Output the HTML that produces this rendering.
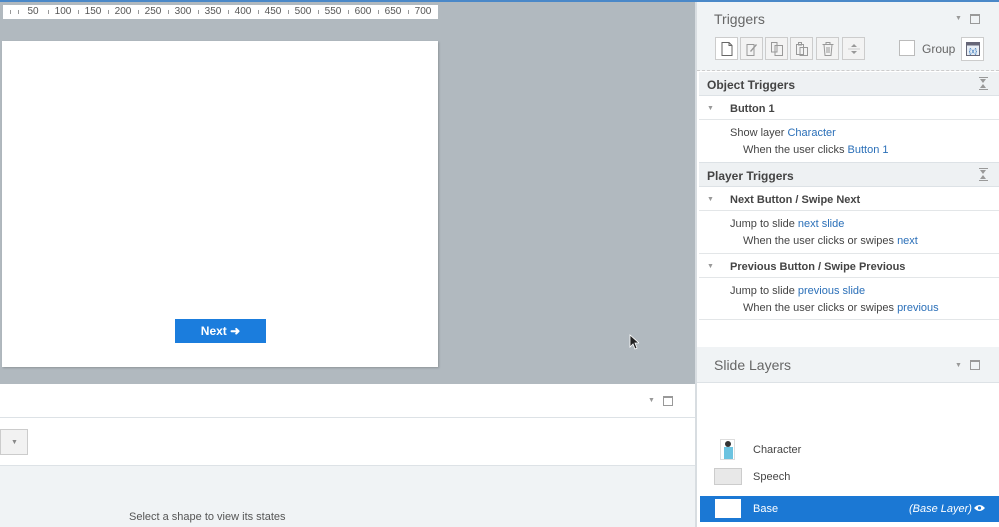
<!DOCTYPE html>
<html><head><style>
*{margin:0;padding:0;box-sizing:border-box}
body{width:999px;height:527px;overflow:hidden;position:relative;font-family:"Liberation Sans",sans-serif;background:#fff;color:#444}
.a{position:absolute}
.t{font-size:11px;white-space:nowrap}
.blue{color:#2a6fb8}
.ib{position:absolute;width:23px;height:23px;border:1px solid #ccc;background:#f3f3f3;top:37px}
.ib svg{position:absolute;left:5px;top:4px}
.r{position:absolute;top:0;font-size:10px;color:#555;transform:translateX(-50%);line-height:14px}
.tk{position:absolute;top:5px;width:1px;height:4px;background:#999}
.mn{position:absolute;width:10px;height:10px;border:1px solid #999;border-top-width:2px}
</style></head><body>
<div class="a" style="left:0;top:0;width:697px;height:384px;background:#b1b9bf"></div>
<div class="a" style="left:0;top:0;width:999px;height:2px;background:#4a88c8"></div>
<div class="a" style="left:3px;top:5px;width:435px;height:14px;background:#fff">
<div class="tk" style="left:7px"></div><div class="tk" style="left:15px"></div>
<span class="r" style="left:30px">50</span><div class="tk" style="left:45px"></div>
<span class="r" style="left:60px">100</span><div class="tk" style="left:75px"></div>
<span class="r" style="left:90px">150</span><div class="tk" style="left:105px"></div>
<span class="r" style="left:120px">200</span><div class="tk" style="left:135px"></div>
<span class="r" style="left:150px">250</span><div class="tk" style="left:165px"></div>
<span class="r" style="left:180px">300</span><div class="tk" style="left:195px"></div>
<span class="r" style="left:210px">350</span><div class="tk" style="left:225px"></div>
<span class="r" style="left:240px">400</span><div class="tk" style="left:255px"></div>
<span class="r" style="left:270px">450</span><div class="tk" style="left:285px"></div>
<span class="r" style="left:300px">500</span><div class="tk" style="left:315px"></div>
<span class="r" style="left:330px">550</span><div class="tk" style="left:345px"></div>
<span class="r" style="left:360px">600</span><div class="tk" style="left:375px"></div>
<span class="r" style="left:390px">650</span><div class="tk" style="left:405px"></div>
<span class="r" style="left:420px">700</span>
</div>
<div class="a" style="left:2px;top:41px;width:436px;height:326px;background:#fff;box-shadow:1px 1px 2px rgba(0,0,0,.2)"></div>
<div class="a" style="left:175px;top:319px;width:91px;height:24px;background:#1b7ddd;color:#fff;font-weight:bold;font-size:12px;text-align:center;line-height:24px">Next ➜</div>
<svg class="a" style="left:629px;top:334px" width="10" height="16" viewBox="0 0 10 16"><path d="M1 1 L1 13 L4 10 L6 15 L8 14 L6 9 L10 9 Z" fill="#222" stroke="#fff" stroke-width=".8"/></svg>
<div class="a" style="left:0;top:384px;width:697px;height:34px;background:#fff;border-bottom:1px solid #dde2e6"></div>
<div class="a" style="left:648px;top:397px;font-size:7px;color:#999">▼</div>
<div class="mn" style="left:663px;top:396px"></div>
<div class="a" style="left:0;top:429px;width:28px;height:26px;background:#f2f2f2;border:1px solid #ccc;font-size:7px;color:#888;padding:9px 0 0 10px">▼</div>
<div class="a" style="left:0;top:465px;width:697px;height:62px;background:#f0f3f5;border-top:1px solid #dde2e6"></div>
<div class="a t" style="left:129px;top:511px;font-size:11px;color:#555">Select a shape to view its states</div>

<div class="a" style="left:695px;top:2px;width:304px;height:525px;background:#fff;border-left:2px solid #d8dde1"></div>
<div class="a" style="left:697px;top:2px;width:302px;height:69px;background:#f0f3f5;border-bottom:1px dashed #ccc"></div>
<div class="a" style="left:714px;top:11px;font-size:14px;color:#666">Triggers</div>
<div class="a" style="left:955px;top:15px;font-size:7px;color:#999">▼</div>
<div class="mn" style="left:970px;top:14px"></div>
<div class="ib" style="left:715px;background:#fff"><svg width="12" height="14" viewBox="0 0 12 14"><path d="M1 .5H8L11 3.5V13.5H1Z M8 .5V3.5H11" fill="none" stroke="#666"/></svg></div>
<div class="ib" style="left:740px"><svg width="12" height="14" viewBox="0 0 12 14"><path d="M1 2.5H8V13.5H1Z" fill="none" stroke="#999"/><path d="M4 9L10 2L11 3L5 10Z" fill="#999"/></svg></div>
<div class="ib" style="left:765px"><svg width="12" height="14" viewBox="0 0 12 14"><path d="M.5 .5H6V10H.5Z M4 3.5H11.5V13.5H4Z" fill="#f3f3f3" stroke="#999"/></svg></div>
<div class="ib" style="left:790px"><svg width="12" height="14" viewBox="0 0 12 14"><path d="M.5 2.5H7.5V12.5H.5Z M4 5.5H11.5V13.5H4Z M2.5 .5H5.5V3H2.5Z" fill="#f3f3f3" stroke="#999"/></svg></div>
<div class="ib" style="left:816px"><svg width="12" height="14" viewBox="0 0 12 14"><path d="M.5 2.5H11.5 M4 2.5V.5H8V2.5 M2 2.5L3 13.5H9L10 2.5 M5 5V11 M7 5V11" fill="none" stroke="#999"/></svg></div>
<div class="ib" style="left:842px"><svg width="12" height="14" viewBox="0 0 12 14"><path d="M3 5L6 2L9 5Z M3 9L6 12L9 9Z" fill="#999"/><path d="M-3 7H15" stroke="#ccc"/></svg></div>
<div class="a" style="left:899px;top:40px;width:16px;height:16px;border:1px solid #bbb;background:#fff"></div>
<div class="a" style="left:922px;top:42px;font-size:12px;color:#666">Group</div>
<div class="a" style="left:961px;top:37px;width:23px;height:24px;border:1px solid #ccc;background:#fff"><svg style="position:absolute;left:4px;top:4px" width="14" height="14" viewBox="0 0 14 14"><rect x=".5" y=".5" width="13" height="13" fill="#e8eef5" stroke="#667"/><rect x=".5" y=".5" width="13" height="3" fill="#667"/><text x="7" y="11.5" font-size="7" text-anchor="middle" fill="#2a6fb8" font-family="Liberation Sans">{x}</text></svg></div>
<div class="a" style="left:699px;top:72px;width:300px;height:24px;background:#eef1f3;border-bottom:1px solid #dde2e6;font-size:12px;font-weight:bold;color:#444;padding:6px 8px">Object Triggers</div>
<div class="a" style="left:979px;top:77px;width:9px;height:13px;border-top:1px solid #999;border-bottom:1px solid #999"><div style="position:absolute;left:1px;top:1px;border:3.5px solid transparent;border-top:4px solid #999"></div><div style="position:absolute;left:1px;top:3px;border:3.5px solid transparent;border-bottom:4px solid #999"></div></div>
<div class="a t" style="left:707px;top:105px;font-size:7px;color:#999">▼</div>
<div class="a t" style="left:730px;top:103px;font-weight:bold">Button 1</div>
<div class="a" style="left:699px;top:119px;width:300px;border-top:1px solid #e3e6e8"></div>
<div class="a t" style="left:730px;top:127px">Show layer <span class="blue">Character</span></div>
<div class="a t" style="left:743px;top:144px">When the user clicks <span class="blue">Button 1</span></div>
<div class="a" style="left:699px;top:162px;width:300px;height:25px;background:#eef1f3;border-top:1px solid #dde2e6;border-bottom:1px solid #dde2e6;font-size:12px;font-weight:bold;color:#444;padding:6px 8px">Player Triggers</div>
<div class="a" style="left:979px;top:168px;width:9px;height:13px;border-top:1px solid #999;border-bottom:1px solid #999"><div style="position:absolute;left:1px;top:1px;border:3.5px solid transparent;border-top:4px solid #999"></div><div style="position:absolute;left:1px;top:3px;border:3.5px solid transparent;border-bottom:4px solid #999"></div></div>
<div class="a t" style="left:707px;top:196px;font-size:7px;color:#999">▼</div>
<div class="a t" style="left:730px;top:194px;font-weight:bold">Next Button / Swipe Next</div>
<div class="a" style="left:699px;top:210px;width:300px;border-top:1px solid #e3e6e8"></div>
<div class="a t" style="left:730px;top:218px">Jump to slide <span class="blue">next slide</span></div>
<div class="a t" style="left:743px;top:235px">When the user clicks or swipes <span class="blue">next</span></div>
<div class="a" style="left:699px;top:253px;width:300px;border-top:1px solid #e3e6e8"></div>
<div class="a t" style="left:707px;top:263px;font-size:7px;color:#999">▼</div>
<div class="a t" style="left:730px;top:261px;font-weight:bold">Previous Button / Swipe Previous</div>
<div class="a" style="left:699px;top:277px;width:300px;border-top:1px solid #e3e6e8"></div>
<div class="a t" style="left:730px;top:285px">Jump to slide <span class="blue">previous slide</span></div>
<div class="a t" style="left:743px;top:302px">When the user clicks or swipes <span class="blue">previous</span></div>
<div class="a" style="left:699px;top:319px;width:300px;border-top:1px solid #e3e6e8"></div>
<div class="a" style="left:697px;top:347px;width:302px;height:36px;background:#f0f3f5;border-bottom:1px solid #dde2e6"></div>
<div class="a" style="left:714px;top:357px;font-size:14px;color:#666">Slide Layers</div>
<div class="a" style="left:955px;top:362px;font-size:7px;color:#999">▼</div>
<div class="mn" style="left:970px;top:360px"></div>
<div class="a" style="left:720px;top:439px;width:15px;height:21px;background:#fff;border:1px solid #ddd"><div style="position:absolute;left:4px;top:1px;width:6px;height:6px;border-radius:50%;background:#333"></div><div style="position:absolute;left:3px;top:7px;width:9px;height:12px;background:#6cc3e0"></div></div>
<div class="a t" style="left:753px;top:444px">Character</div>
<div class="a" style="left:714px;top:468px;width:28px;height:17px;background:#e8e8e8;border:1px solid #ccc"></div>
<div class="a t" style="left:753px;top:471px">Speech</div>
<div class="a" style="left:700px;top:496px;width:299px;height:26px;background:#1b78d4"></div>
<div class="a" style="left:715px;top:499px;width:26px;height:19px;background:#fff"></div>
<div class="a t" style="left:753px;top:503px;color:#fff">Base</div>
<div class="a t" style="left:909px;top:503px;color:#fff;font-style:italic">(Base Layer)</div>
<svg class="a" style="left:974px;top:504px" width="11" height="8" viewBox="0 0 11 8"><path d="M0 4Q5.5 -2 11 4Q5.5 10 0 4Z" fill="#fff"/><circle cx="5.5" cy="4" r="1.6" fill="#1b78d4"/></svg>
</body></html>
